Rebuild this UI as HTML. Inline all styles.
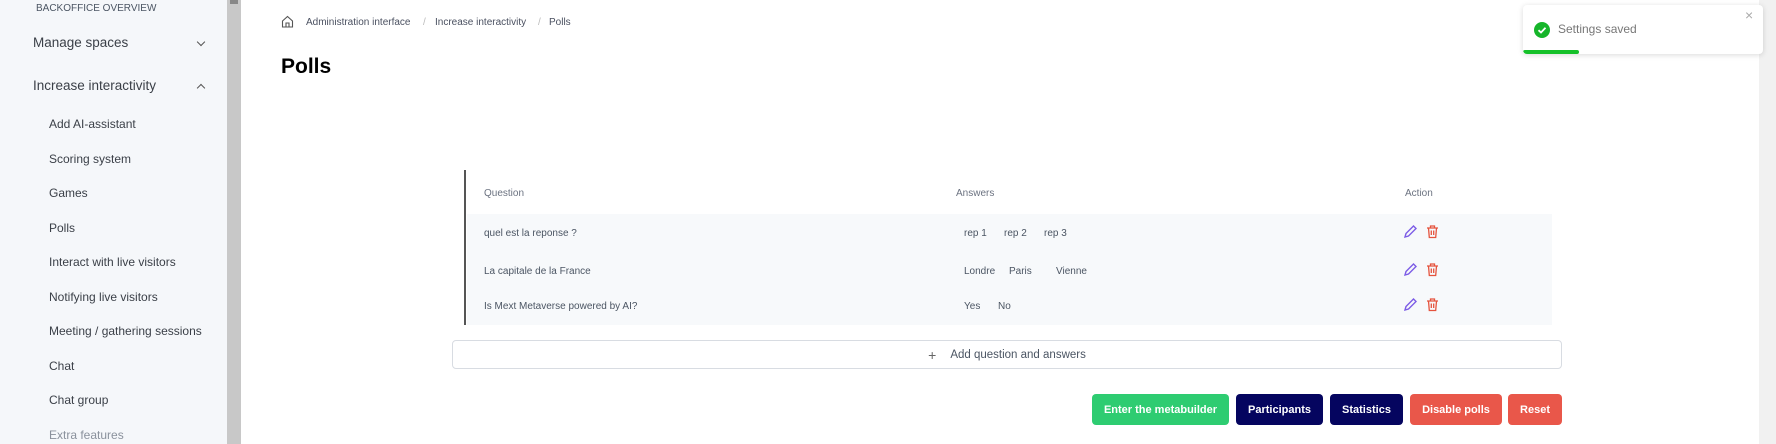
<!DOCTYPE html>
<html><head><meta charset="utf-8"><style>
*{margin:0;padding:0;box-sizing:border-box}
body{width:1776px;height:444px;overflow:hidden;background:#fff;font-family:"Liberation Sans",sans-serif;position:relative}
.a{position:absolute;white-space:nowrap}
#side{left:0;top:0;width:227px;height:444px;background:#f5f7fa}
#sb{left:227px;top:0;width:14px;height:444px;background:#c8c8c8}
#rsb{left:1759px;top:0;width:17px;height:444px;background:#f1f1f1}
.sub{left:49px;font-size:12px;color:#3a3f47}
.mm{left:33px;font-size:13.5px;color:#3a3f47}
.chev{left:198px;width:6px;height:6px;border-right:1.3px solid #555;border-bottom:1.3px solid #555}
.bc{font-size:10px;color:#4a5060;top:17px}
.th{font-size:10px;color:#6b7280;top:188px}
.td{font-size:10px;color:#4b5563}
.row{left:467px;width:1085px;background:#f7f9fb}
.btn{top:394px;height:31px;border-radius:4px;color:#fff;font-weight:bold;font-size:11px;display:flex;align-items:center;justify-content:center}
</style></head><body>
<div class="a" id="side"></div>
<div class="a" id="sb"></div>
<div class="a" style="left:230px;top:0;width:8px;height:4px;background:#888"></div>
<div class="a" id="rsb"></div>
<div class="a" style="left:36px;top:3px;font-size:10px;color:#4b5563">BACKOFFICE OVERVIEW</div>
<div class="a mm" style="top:35px">Manage spaces</div>
<div class="a chev" style="top:39px;transform:rotate(45deg)"></div>
<div class="a mm" style="top:78px">Increase interactivity</div>
<div class="a chev" style="top:85px;transform:rotate(-135deg)"></div>
<div class="a sub" style="top:117px">Add AI-assistant</div>
<div class="a sub" style="top:152px">Scoring system</div>
<div class="a sub" style="top:186px">Games</div>
<div class="a sub" style="top:221px">Polls</div>
<div class="a sub" style="top:255px">Interact with live visitors</div>
<div class="a sub" style="top:290px">Notifying live visitors</div>
<div class="a sub" style="top:324px">Meeting / gathering sessions</div>
<div class="a sub" style="top:359px">Chat</div>
<div class="a sub" style="top:393px">Chat group</div>
<div class="a sub" style="top:428px;color:#8a919c">Extra features</div>

<svg class="a" style="left:281px;top:15px" width="13" height="13" viewBox="0 0 13 13" fill="none" stroke="#555" stroke-width="1.1"><path d="M1.5 6L6.5 1.5L11.5 6V12H1.5Z"/><path d="M5 12V8H8V12"/></svg>
<div class="a bc" style="left:306px">Administration interface</div>
<div class="a bc" style="left:423px;color:#bbb">/</div>
<div class="a bc" style="left:435px">Increase interactivity</div>
<div class="a bc" style="left:538px;color:#bbb">/</div>
<div class="a bc" style="left:549px">Polls</div>
<div class="a" style="left:281px;top:55px;font-size:21px;font-weight:bold;color:#000">Polls</div>

<div class="a" style="left:464px;top:170px;width:1.5px;height:155px;background:#555"></div>
<div class="a th" style="left:484px">Question</div>
<div class="a th" style="left:956px">Answers</div>
<div class="a th" style="left:1405px">Action</div>
<div class="a row" style="top:214px;height:111px"></div>
<div class="a td" style="left:484px;top:228px">quel est la reponse ?</div>
<div class="a td" style="left:964px;top:228px">rep 1</div><div class="a td" style="left:1004px;top:228px">rep 2</div><div class="a td" style="left:1044px;top:228px">rep 3</div>
<div class="a td" style="left:484px;top:266px">La capitale de la France</div>
<div class="a td" style="left:964px;top:266px">Londre</div><div class="a td" style="left:1009px;top:266px">Paris</div><div class="a td" style="left:1056px;top:266px">Vienne</div>
<div class="a td" style="left:484px;top:301px">Is Mext Metaverse powered by AI?</div>
<div class="a td" style="left:964px;top:301px">Yes</div><div class="a td" style="left:998px;top:301px">No</div>

<svg width="0" height="0" style="position:absolute"><defs>
<g id="pen" fill="none" stroke="#7c5ce6" stroke-width="1.4"><path d="M2 13L3 9.5L10.5 2L13 4.5L5.5 12Z"/></g>
<g id="bin" fill="none" stroke="#e5533d" stroke-width="1.3"><path d="M2 4H13M5.5 4V2H9.5V4M3.5 4L4.3 13.5H10.7L11.5 4M6.3 6.5V11M8.7 6.5V11"/></g></defs></svg>
<svg class="a" style="left:1403px;top:224px" width="15" height="15"><use href="#pen"/></svg>
<svg class="a" style="left:1425px;top:224px" width="15" height="15"><use href="#bin"/></svg>
<svg class="a" style="left:1403px;top:262px" width="15" height="15"><use href="#pen"/></svg>
<svg class="a" style="left:1425px;top:262px" width="15" height="15"><use href="#bin"/></svg>
<svg class="a" style="left:1403px;top:297px" width="15" height="15"><use href="#pen"/></svg>
<svg class="a" style="left:1425px;top:297px" width="15" height="15"><use href="#bin"/></svg>

<div class="a" style="left:452px;top:340px;width:1110px;height:29px;border:1px solid #d8dce2;border-radius:4px;display:flex;align-items:center;justify-content:center;font-size:11.5px;color:#4b5563"><span style="font-size:14px;margin-right:14px;color:#666">+</span>Add question and answers</div>

<div class="a btn" style="left:1092px;width:137px;background:#2ecc71">Enter the metabuilder</div>
<div class="a btn" style="left:1236px;width:87px;background:#05055f">Participants</div>
<div class="a btn" style="left:1330px;width:73px;background:#05055f">Statistics</div>
<div class="a btn" style="left:1410px;width:92px;background:#e9574a">Disable polls</div>
<div class="a btn" style="left:1508px;width:54px;background:#e9574a">Reset</div>

<div class="a" style="left:1523px;top:5px;width:240px;height:49px;background:#fff;border-radius:4px;box-shadow:0 1px 6px rgba(0,0,0,.15);overflow:hidden">
<div class="a" style="left:0;bottom:0;width:56px;height:4px;background:#16c12a;border-radius:2px"></div>
<svg class="a" style="left:11px;top:17px" width="16" height="16" viewBox="0 0 16 16"><circle cx="8" cy="8" r="8" fill="#16b52a"/><path d="M4.5 8.2L7 10.5L11.5 5.8" fill="none" stroke="#fff" stroke-width="1.8"/></svg>
<div class="a" style="left:35px;top:17px;font-size:12px;color:#777">Settings saved</div>
<div class="a" style="left:222px;top:2px;font-size:14px;color:#aaa">×</div>
</div>
</body></html>
